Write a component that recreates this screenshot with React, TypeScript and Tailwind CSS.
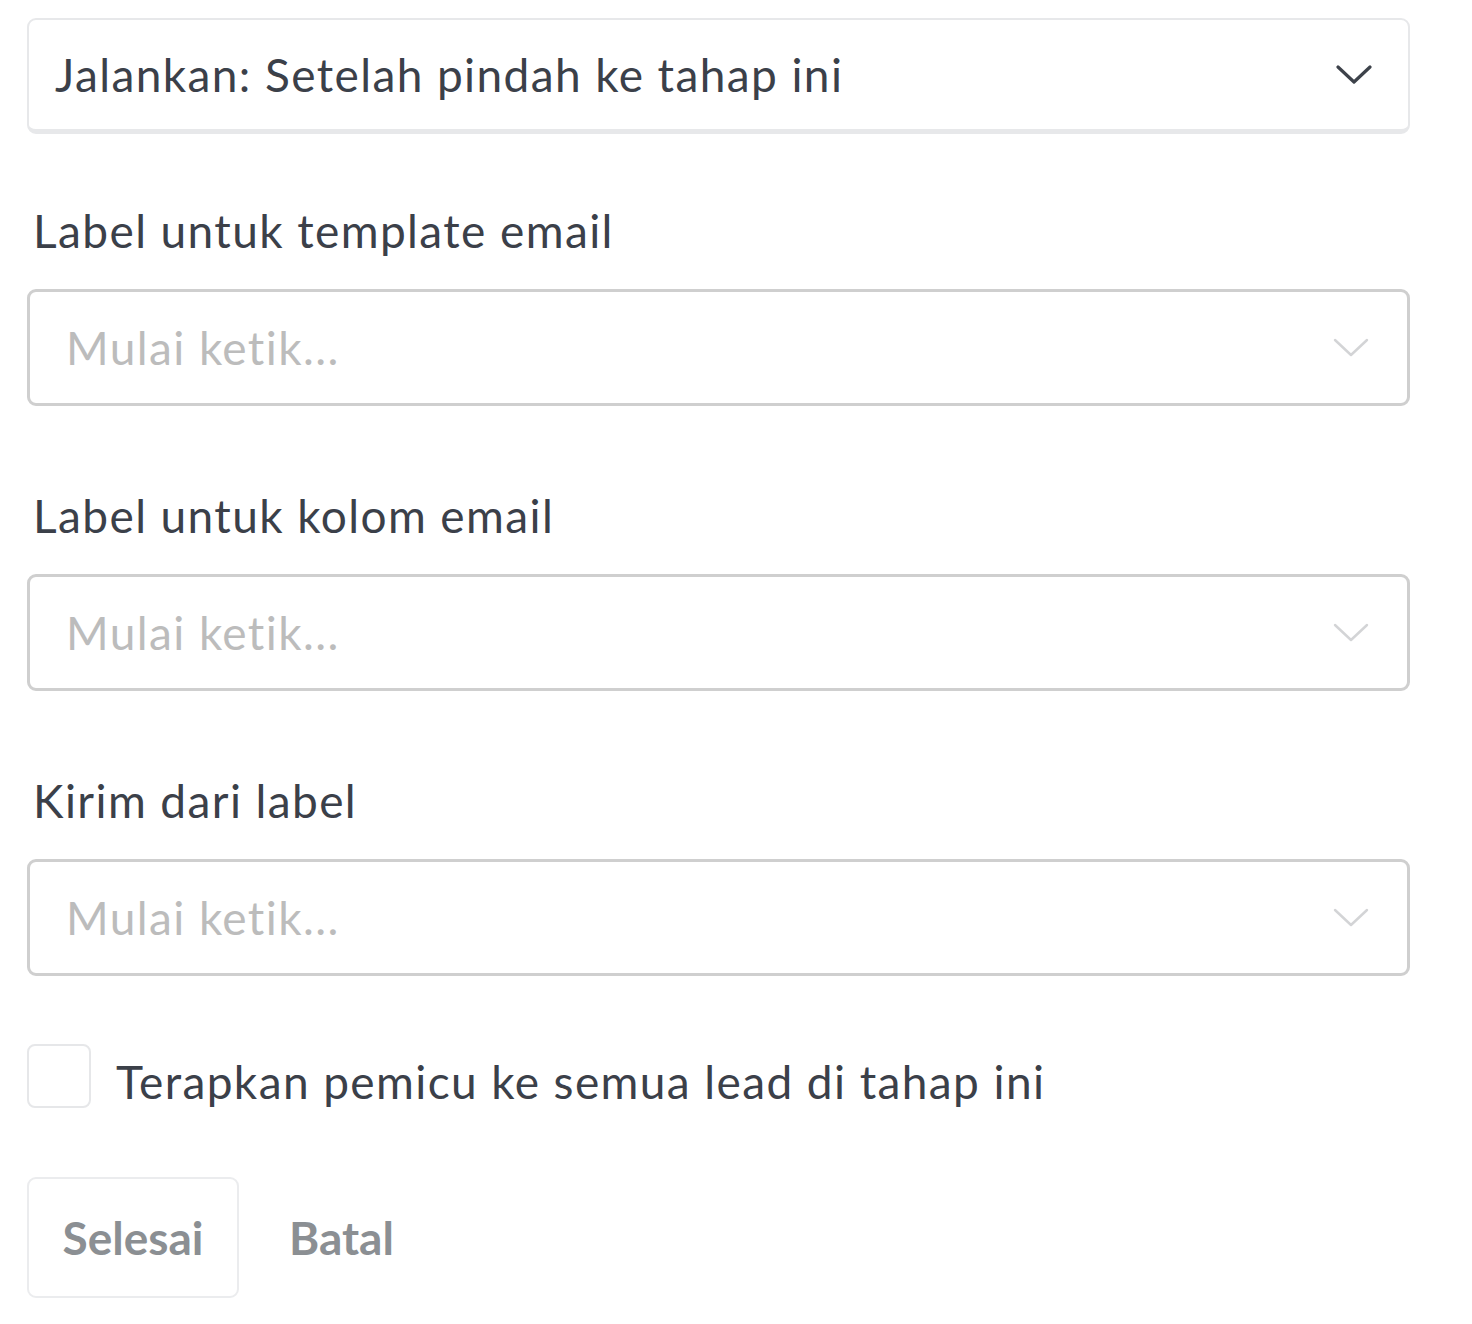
import React from "react";

const font = { fontFamily: "Lato, 'Open Sans', sans-serif" };

function Chevron({ dark }: { dark?: boolean }) {
  return (
    <svg
      width="36"
      height="20"
      viewBox="0 0 36 20"
      fill="none"
      stroke={dark ? "#3d424a" : "#d3d4d6"}
      strokeWidth={dark ? 3.2 : 2.4}
      strokeLinecap="round"
      strokeLinejoin="round"
    >
      <path d="M2 2 L18 17 L34 2" />
    </svg>
  );
}

function Field({ label, first }: { label: string; first?: boolean }) {
  return (
    <div className={first ? "mt-[68px]" : "mt-[81px]"}>
      <div className="h-[58px] leading-[58px] pl-[6px] text-[46px] tracking-[1.4px] text-[#3b4049]">{label}</div>
      <div className="mt-[29px] flex h-[117px] items-center justify-between rounded-[9px] border-[3px] border-[#cfcfcf] bg-white pl-[36px] pr-[38px]">
        <span className="text-[46px] tracking-[1.4px] text-[#bcbcbc]">Mulai ketik...</span>
        <Chevron />
      </div>
    </div>
  );
}

export default function App() {
  return (
    <div className="min-h-[1324px] w-[1472px] bg-white" style={font}>
      <div className="ml-[27px] w-[1383px] pt-[18px]">
        <div className="flex h-[116px] items-center justify-between rounded-[9px] border-2 border-b-[5px] border-[#e7e8ea] bg-white pl-[26px] pr-[36px]">
          <span className="text-[46px] tracking-[1.4px] text-[#3b4049]">Jalankan: Setelah pindah ke tahap ini</span>
          <Chevron dark />
        </div>

        <Field label="Label untuk template email" first />
        <Field label="Label untuk kolom email" />
        <Field label="Kirim dari label" />

        <div className="mt-[68px] flex items-start">
          <div className="h-[64px] w-[64px] shrink-0 rounded-[8px] border-2 border-[#e6e7e9] bg-white" />
          <span className="ml-[25px] pt-[6px] text-[46px] leading-[64px] tracking-[1.4px] text-[#3b4049]">
            Terapkan pemicu ke semua lead di tahap ini
          </span>
        </div>

        <div className="mt-[63px] flex items-center">
          <button className="h-[121px] w-[212px] rounded-[9px] border-2 border-[#ebecee] bg-white text-[46px] font-bold text-[#8b8f93]">
            Selesai
          </button>
          <button className="ml-[50px] text-[46px] font-bold text-[#8b8f93]">Batal</button>
        </div>
      </div>
    </div>
  );
}
